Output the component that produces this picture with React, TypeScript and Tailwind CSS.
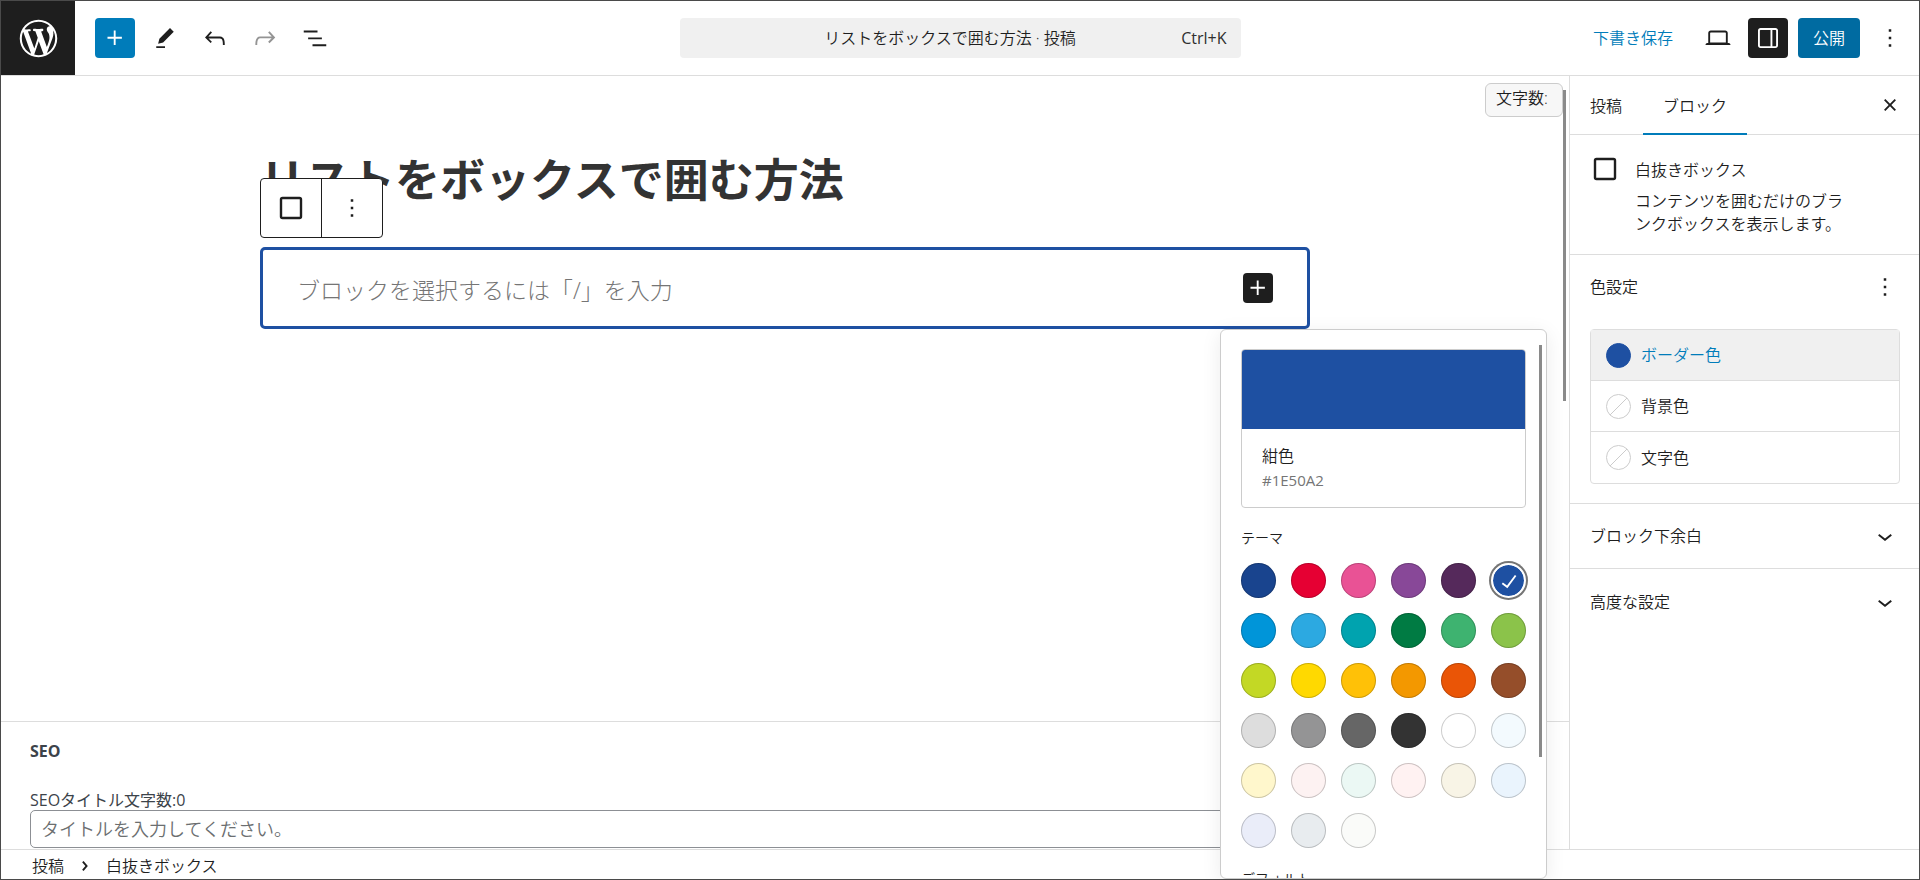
import { useState } from "react"
import type { ReactNode } from "react"
import clsx from "clsx"

const ICONS = {
  plus: "M11 12.5V17.5H12.5V12.5H17.5V11H12.5V6H11V11H6V12.5H11Z",
  edit: "m19 7-3-3-8.5 8.5-1 4 4-1L19 7Zm-7 11.5H5V20h7v-1.5Z",
  undo: "M18.3 11.7c-.6-.6-1.4-.9-2.3-.9H6.7l2.9-3.3-1.1-1-4.5 5L8.5 16l1-1-2.7-2.7H16c.5 0 .9.2 1.3.5 1 1 1 3.4 1 4.5v.3h1.5v-.2c0-1.5 0-4.3-1.5-5.7z",
  redo: "M15.6 6.5l-1.1 1 2.9 3.3H8c-.9 0-1.7.3-2.3.9-1.4 1.5-1.4 4.2-1.4 5.6v.2h1.5v-.3c0-1.1 0-3.5 1-4.5.3-.3.7-.5 1.3-.5h9.2L14.5 15l1.1 1.1 4.6-4.6-4.6-5z",
  list: "M3 6h11v1.5H3V6Zm3.5 5.5h11V13h-11v-1.5ZM21 17H10v1.5h11V17Z",
  desktop: "M20.5 16h-.7V8c0-1.1-.9-2-2-2H6.2c-1.1 0-2 .9-2 2v8h-.7c-.8 0-1.5.7-1.5 1.5h20c0-.8-.7-1.5-1.5-1.5zM5.7 8c0-.3.2-.5.5-.5h11.6c.3 0 .5.2.5.5v7.6H5.7V8z",
  drawer: "M18 4H6c-1.1 0-2 .9-2 2v12c0 1.1.9 2 2 2h12c1.1 0 2-.9 2-2V6c0-1.1-.9-2-2-2zm-4 14.5H6c-.3 0-.5-.2-.5-.5V6c0-.3.2-.5.5-.5h8v13zm4.5-.5c0 .3-.2.5-.5.5h-2.5v-13H18c.3 0 .5.2.5.5v12z",
  more: "M13 19h-2v-2h2v2zm0-6h-2v-2h2v2zm0-6h-2V5h2v2z",
  close: "M12 13.06l3.712 3.713 1.061-1.06L13.061 12l3.712-3.712-1.06-1.06L12 10.938 8.288 7.227l-1.061 1.06L10.939 12l-3.712 3.712 1.06 1.061L12 13.061z",
  chevronDown: "M17.5 11.6L12 16l-5.5-4.4.9-1.2L12 14l4.5-3.6 1 1.2z",
  chevronRight: "M10.86 8.04L14.28 12.03L10.86 16.02L9.72 15.04L12.3 12.03L9.72 9.02L10.86 8.04Z",
  check: "M16.7 7.1l-6.3 8.5-3.3-2.5-.9 1.2 4.5 3.4L17.9 8z",
}

const PALETTE = [
  "#19448e", "#e60033", "#e95295", "#884898", "#55295b", "#1e50a2",
  "#0095d9", "#2ca9e1", "#00a3af", "#007b43", "#3eb370", "#8bc34a",
  "#c3d825", "#ffd900", "#ffc107", "#f39800", "#ea5506", "#954e2a",
  "#dddddd", "#949495", "#666666", "#333333", "#ffffff", "#f3fafe",
  "#fff7cc", "#fdf2f2", "#ebf8f4", "#fff2f2", "#f8f4e6", "#eaf4fd",
  "#eaedf9", "#e8ecef", "#fafbf9",
]

function Icon({ name, className = "size-[30px]" }: { name: keyof typeof ICONS; className?: string }) {
  return (
    <svg viewBox="0 0 24 24" fill="currentColor" aria-hidden className={clsx("shrink-0", className)}>
      <path d={ICONS[name]} />
    </svg>
  )
}

function BoxIcon() {
  return (
    <svg viewBox="0 0 30 30" fill="none" stroke="currentColor" strokeWidth="2.4" aria-hidden className="size-[30px] shrink-0">
      <rect x="5" y="5" width="20" height="20" rx="1.5" />
    </svg>
  )
}

function IconButton({ label, className, children }: { label: string; className?: string; children: ReactNode }) {
  return (
    <button aria-label={label} className={clsx("size-10 shrink-0 flex items-center justify-center rounded-sm", className)}>
      {children}
    </button>
  )
}

function Header() {
  return (
    <header className="h-[75px] shrink-0 grid grid-cols-[1fr_561px_1fr] items-center border-b border-[#ddd]">
      <div className="flex items-center h-[74px]">
        <a href="#" aria-label="投稿一覧" className="w-[74px] h-full bg-[#1e1e1e] text-white flex items-center justify-center">
          <svg viewBox="-2 -2 24 24" fill="currentColor" className="size-[45px]">
            <path d="M20 10c0-5.51-4.49-10-10-10C4.48 0 0 4.49 0 10c0 5.52 4.48 10 10 10 5.51 0 10-4.48 10-10zM7.78 15.37L4.37 6.22c.55-.02 1.17-.08 1.17-.08.5-.06.44-1.13-.06-1.11 0 0-1.45.11-2.37.11-.18 0-.37 0-.58-.01C4.12 2.69 6.87 1.11 10 1.11c2.33 0 4.45.87 6.05 2.34-.68-.11-1.65.39-1.65 1.58 0 .74.45 1.36.9 2.1.35.61.55 1.36.55 2.46 0 1.49-1.4 5-1.4 5l-3.03-8.37c.54-.02.82-.17.82-.17.5-.05.44-1.25-.06-1.22 0 0-1.44.12-2.38.12-.87 0-2.33-.12-2.33-.12-.5-.03-.56 1.2-.06 1.22l.92.08 1.26 3.41zM17.41 10c.24-.64.74-1.87.43-4.25.7 1.29 1.05 2.71 1.05 4.25 0 3.29-1.73 6.24-4.4 7.78.97-2.59 1.94-5.2 2.92-7.78zM6.1 18.09C3.12 16.65 1.11 13.53 1.11 10c0-1.3.23-2.48.72-3.59C3.25 10.3 4.67 14.2 6.1 18.09zm4.03-6.63l2.58 6.98c-.86.29-1.76.45-2.71.45-.79 0-1.57-.11-2.29-.33.81-2.38 1.62-4.74 2.42-7.1z" />
          </svg>
        </a>
        <div className="flex items-center gap-2.5 pl-5">
          <IconButton label="ブロックを追加" className="bg-[#007cba] text-white"><Icon name="plus" /></IconButton>
          <IconButton label="ツール"><Icon name="edit" /></IconButton>
          <IconButton label="元に戻す"><Icon name="undo" /></IconButton>
          <IconButton label="やり直す" className="text-[#949494]"><Icon name="redo" /></IconButton>
          <IconButton label="リスト表示"><Icon name="list" /></IconButton>
        </div>
      </div>

      <button className="h-10 grid grid-cols-[1fr_auto_1fr] items-center rounded bg-[#f0f0f0] px-3.5">
        <span className="col-start-2 pr-5">リストをボックスで囲む方法 · 投稿</span>
        <span className="text-right font-normal text-[#2f2f2f]">Ctrl+K</span>
      </button>

      <div className="flex items-center justify-end gap-2.5 pr-[9px]">
        <button className="h-10 px-[15px] text-[#007cba]">下書き保存</button>
        <IconButton label="プレビュー"><Icon name="desktop" /></IconButton>
        <IconButton label="設定" className="bg-[#1e1e1e] text-white"><Icon name="drawer" /></IconButton>
        <button className="h-10 px-[15px] rounded-sm bg-[#006ba1] text-white">公開</button>
        <IconButton label="オプション"><Icon name="more" /></IconButton>
      </div>
    </header>
  )
}

function Canvas() {
  return (
    <div className="relative flex-1 min-h-0">
      <div className="max-w-[1050px] mx-auto pt-[68px]">
        <h1 className="text-[45px] leading-[72px] font-bold text-[#333] whitespace-nowrap">リストをボックスで囲む方法</h1>
        <div className="relative mt-[31px] h-[82px] flex items-center justify-between border-3 border-[#1e50a2] rounded-[5px] px-[34px]">
          <p className="pt-1 text-[23px] text-[#757575] font-light">ブロックを選択するには「/」を入力</p>
          <button aria-label="ブロックを追加" className="size-[30px] rounded-sm bg-[#1e1e1e] text-white flex items-center justify-center">
            <Icon name="plus" />
          </button>
          {/* Block toolbar floats over the title */}
          <div className="absolute -left-[3px] -top-[72px] h-[60px] flex bg-white border border-[#1e1e1e] rounded-sm divide-x divide-[#1e1e1e]">
            <button aria-label="白抜きボックス" className="w-[61px] flex items-center justify-center"><BoxIcon /></button>
            <button aria-label="オプション" className="w-[60px] flex items-center justify-center"><Icon name="more" /></button>
          </div>
        </div>
      </div>
      <div className="absolute right-[6px] top-[7px] h-[34px] px-2.5 pb-1 flex items-center border border-[#ccc] rounded-md bg-[#f7f7f7]">
        文字数:&nbsp;
      </div>
      <div className="absolute right-[3px] top-3.5 w-[3px] h-[311px] bg-[#8a8a8a]" />
    </div>
  )
}

function SeoBox() {
  return (
    <section className="shrink-0 h-32 border-t border-[#ddd] px-[29px] text-[#3c434a]">
      <h2 className="font-bold leading-6 pt-[17px]">SEO</h2>
      <label htmlFor="seo-title" className="block font-normal leading-6 pt-[25px]">SEOタイトル文字数:0</label>
      <input
        id="seo-title"
        placeholder="タイトルを入力してください。"
        className="block w-full h-[38px] mt-[-2px] px-2.5 border border-[#8c8f94] rounded-[5px] text-lg placeholder:text-[#6b6e70]"
      />
    </section>
  )
}

function ColorRow({ label, color }: { label: string; color?: string }) {
  return (
    <button
      className={clsx(
        "w-full h-[51px] flex items-center gap-2.5 px-[15px] border-[#ddd] not-last:border-b",
        color && "bg-[#f0f0f0] text-[#007cba]",
      )}
    >
      <svg viewBox="0 0 25 25" className="size-[25px]" aria-hidden>
        <circle cx="12.5" cy="12.5" r="12" fill={color ?? "#fff"} stroke={color ?? "#ccc"} />
        {!color && <path d="M4 21 21 4" stroke="#ccc" />}
      </svg>
      {label}
    </button>
  )
}

function Sidebar() {
  return (
    <aside className="w-[350px] shrink-0 border-l border-[#ddd]">
      <div className="h-[59px] flex items-center border-b border-[#ddd] pr-[9px]">
        <div role="tablist" className="flex-1 flex gap-px h-[59px]">
          <button role="tab" aria-selected="false" className="px-5 pt-0.5">投稿</button>
          <button role="tab" aria-selected="true" className="px-5 pt-1 border-b-2 border-[#007cba]">ブロック</button>
        </div>
        <IconButton label="設定を閉じる"><Icon name="close" /></IconButton>
      </div>

      <div className="flex gap-[15px] pl-5 pr-16 pt-[19px] pb-3 border-b border-[#ddd]">
        <BoxIcon />
        <div>
          <h2 className="leading-8">白抜きボックス</h2>
          <p className="leading-[23px] mt-1 pb-1.5">コンテンツを囲むだけのブランクボックスを表示します。</p>
        </div>
      </div>

      <div className="pt-3 pb-[19px] border-b border-[#ddd]">
        <div className="flex items-center justify-between pl-5 pr-3.5">
          <h2>色設定</h2>
          <IconButton label="色設定オプション"><Icon name="more" /></IconButton>
        </div>
        <div className="mx-5 mr-[19px] mt-[22px] border border-[#ddd] rounded-sm">
          <ColorRow label="ボーダー色" color="#1e50a2" />
          <ColorRow label="背景色" />
          <ColorRow label="文字色" />
        </div>
      </div>

      <button className="w-full h-[65px] flex items-center justify-between pl-5 pr-[19px] border-b border-[#ddd]">
        ブロック下余白
        <Icon name="chevronDown" />
      </button>
      <button className="w-full h-[65px] flex items-center justify-between pl-5 pr-[19px]">
        高度な設定
        <Icon name="chevronDown" />
      </button>
    </aside>
  )
}

function ColorPopover() {
  const [selected, setSelected] = useState("#1e50a2")

  return (
    <div className="absolute right-[372px] top-[253px] bottom-0 w-[327px] overflow-hidden bg-white border border-[#ccc] rounded-md shadow-[0_4px_20px_rgba(0,0,0,0.08)] px-5 pt-[19px]">
      <button className="block w-full text-left border border-[#ccc] rounded overflow-hidden">
        <span className="block h-20 -mx-px -mt-px" style={{ backgroundColor: selected }} />
        <span className="block px-5 pt-[15px] pb-3.5">
          <span className="block leading-6">紺色</span>
          <span className="block text-[15px] leading-[25px] font-normal text-[#757575] uppercase">{selected}</span>
        </span>
      </button>

      <h3 className="text-sm leading-5 mt-5">テーマ</h3>
      <div className="grid grid-cols-[repeat(6,35px)] gap-[15px] mt-[15px]">
        {PALETTE.map((color) => (
          <button
            key={color}
            aria-label={color}
            onClick={() => setSelected(color)}
            style={{ backgroundColor: color }}
            className={clsx(
              "size-[35px] rounded-full flex items-center justify-center",
              color === selected
                ? "text-white border-2 border-white ring-2 ring-[#757575] bg-clip-padding"
                : "shadow-[inset_0_0_0_1px_rgba(0,0,0,0.2)]",
            )}
          >
            {color === selected && <Icon name="check" />}
          </button>
        ))}
      </div>
      <h3 className="text-sm leading-5 mt-[21px]">デフォルト</h3>
      <div className="absolute right-1 top-[15px] w-[3px] h-[412px] bg-[#8a8a8a]" />
    </div>
  )
}

export default function App() {
  return (
    <div
      className="h-screen flex flex-col overflow-hidden bg-white border border-[#4a4a4a] text-base font-[350] text-[#1e1e1e] font-['Open_Sans','Noto_Sans_CJK_JP',sans-serif]"
    >
      <Header />
      <div className="relative flex-1 min-h-0 flex flex-col">
        <div className="flex-1 min-h-0 flex">
          <main className="flex-1 min-w-0 flex flex-col">
            <Canvas />
            <SeoBox />
          </main>
          <Sidebar />
        </div>
        <nav aria-label="パンくず" className="h-[30px] shrink-0 flex items-center gap-1.5 pl-[31px] pt-0.5 border-t border-[#ddd]">
          <a href="#">投稿</a>
          <Icon name="chevronRight" />
          <a href="#">白抜きボックス</a>
        </nav>
        <ColorPopover />
      </div>
    </div>
  )
}
